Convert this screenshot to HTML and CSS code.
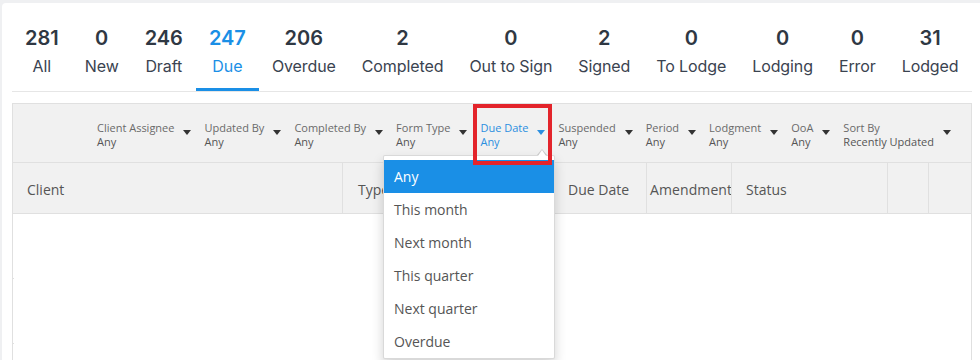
FILE: index.html
```html
<!DOCTYPE html>
<html lang="en">
<head>
  <meta charset="UTF-8">
  <title>Returns</title>
  <link rel="stylesheet" href="styles.css">
</head>
<body>

<div class="card">

  <!-- status tabs -->
  <div class="tabs">
    <div class="tab"><span class="count">281</span><span class="name">All</span></div>
    <div class="tab"><span class="count">0</span><span class="name">New</span></div>
    <div class="tab"><span class="count">246</span><span class="name">Draft</span></div>
    <div class="tab active"><span class="count">247</span><span class="name">Due</span></div>
    <div class="tab"><span class="count">206</span><span class="name">Overdue</span></div>
    <div class="tab"><span class="count">2</span><span class="name">Completed</span></div>
    <div class="tab"><span class="count">0</span><span class="name">Out to Sign</span></div>
    <div class="tab"><span class="count">2</span><span class="name">Signed</span></div>
    <div class="tab"><span class="count">0</span><span class="name">To Lodge</span></div>
    <div class="tab"><span class="count">0</span><span class="name">Lodging</span></div>
    <div class="tab"><span class="count">0</span><span class="name">Error</span></div>
    <div class="tab"><span class="count">31</span><span class="name">Lodged</span></div>
  </div>

  <div class="grid">

    <!-- filters -->
    <div class="filters">
      <div class="filter"><div><div class="f-label">Client Assignee</div><div class="f-value">Any</div></div><span class="caret"></span></div>
      <div class="filter"><div><div class="f-label">Updated By</div><div class="f-value">Any</div></div><span class="caret"></span></div>
      <div class="filter"><div><div class="f-label">Completed By</div><div class="f-value">Any</div></div><span class="caret"></span></div>
      <div class="filter"><div><div class="f-label">Form Type</div><div class="f-value">Any</div></div><span class="caret"></span></div>
      <div class="filter open"><div><div class="f-label">Due Date</div><div class="f-value">Any</div></div><span class="caret"></span></div>
      <div class="filter"><div><div class="f-label">Suspended</div><div class="f-value">Any</div></div><span class="caret"></span></div>
      <div class="filter"><div><div class="f-label">Period</div><div class="f-value">Any</div></div><span class="caret"></span></div>
      <div class="filter"><div><div class="f-label">Lodgment</div><div class="f-value">Any</div></div><span class="caret"></span></div>
      <div class="filter"><div><div class="f-label">OoA</div><div class="f-value">Any</div></div><span class="caret"></span></div>
      <div class="filter sort"><div><div class="f-label">Sort By</div><div class="f-value">Recently Updated</div></div><span class="caret"></span></div>
    </div>

    <!-- column headers -->
    <div class="head">
      <div class="col">Client</div>
      <div class="col">Type</div>
      <div class="col">Due Date</div>
      <div class="col tight">Amendment</div>
      <div class="col">Status</div>
      <div class="col"></div>
      <div class="col"></div>
    </div>

    <div class="rows">
      <div class="row"></div>
      <div class="row"></div>
      <div class="row"></div>
      <div class="mask"></div>
    </div>

    <!-- due date menu -->
    <ul class="menu">
      <li class="selected">Any</li>
      <li>This month</li>
      <li>Next month</li>
      <li>This quarter</li>
      <li>Next quarter</li>
      <li>Overdue</li>
    </ul>

    <div class="highlight"></div>
  </div>

</div>

</body>
</html>
```

FILE: styles.css
```css
* { box-sizing: border-box; }
body { margin: 0; background: #eff0f2; font-family: "Open Sans", "Liberation Sans", sans-serif; overflow: hidden; }

.card { margin: 3px 0 0 2px; height: 400px; padding: 0 8px 0 10px; background: #fff; border-radius: 4px 0 0 0; }

.tabs { display: flex; border-bottom: 1px solid #e6e6e6; font-family: Inter, "Liberation Sans", sans-serif; }
.tab { display: flex; flex-direction: column; align-items: center; padding: 23px 13px 0; border-bottom: 3px solid transparent; height: 88px; white-space: nowrap; }
.tab .count { font-size: 20px; line-height: 24px; font-weight: 600; color: #2f3843; }
.tab .name { font-size: 16px; line-height: 22px; margin-top: 5px; color: #3a4350; letter-spacing: -0.1px; }
.tab.active { border-bottom-color: #1a8fe6; }
.tab.active .count, .tab.active .name { color: #1a8fe6; }

.grid { position: relative; margin-top: 11px; border: 1px solid #e0e0e0; border-bottom: none; }

.filters { display: flex; justify-content: flex-end; gap: 13px; height: 59px; padding: 17px 20px 0 0; background: #f1f1f1; border-bottom: 1px solid #e0e0e0; }
.filter { display: flex; align-items: flex-start; gap: 9px; white-space: nowrap; }
.f-label { font-size: 11px; line-height: 14px; color: #6a6a6a; }
.f-value { font-size: 11px; line-height: 14px; color: #555; }
.caret { margin-top: 9px; border-left: 4px solid transparent; border-right: 4px solid transparent; border-top: 5px solid #333; }
.filter.open .f-label, .filter.open .f-value { color: #2b8fe0; }
.filter.open .caret { border-top-color: #2b8fe0; }

.head { display: grid; grid-template-columns: 330px 210px 94px 85px 156px 41px 42px; height: 51px; background: #f1f1f1; border-bottom: 1px solid #e0e0e0; }
.col { display: flex; align-items: center; padding: 3px 14px 0; border-right: 1px solid #e0e0e0; font-size: 14px; color: #555; white-space: nowrap; overflow: hidden; }
.col:nth-child(2), .col:nth-child(3) { padding-left: 15px; }
.col.tight { padding-left: 3px; padding-right: 0; letter-spacing: 0.1px; }
.col:last-child { border-right: none; }

.rows { position: relative; height: 160px; }
.row { height: 65px; border-bottom: 1px solid #e0e0e0; }
.mask { position: absolute; top: 5px; left: 1px; right: 0; bottom: 0; background: #fff; }

.menu { position: absolute; left: 370px; top: 51px; width: 172px; margin: 0; padding: 4px 0 0; list-style: none; background: #fff; border: 1px solid rgba(0, 0, 0, 0.15); border-radius: 2px; box-shadow: 0 6px 12px rgba(0, 0, 0, 0.18); z-index: 2; }
.menu::before { content: ""; position: absolute; top: -7px; left: 153px; border-left: 5px solid transparent; border-right: 5px solid transparent; border-bottom: 6px solid rgba(0, 0, 0, 0.15); }
.menu::after { content: ""; position: absolute; top: -6px; left: 154px; border-left: 4px solid transparent; border-right: 4px solid transparent; border-bottom: 6px solid #fff; }
.menu li { height: 33px; line-height: 33px; padding-left: 10px; font-size: 14px; color: #555; }
.menu li.selected { background: #1a8fe6; color: #fff; }

.highlight { position: absolute; left: 460px; top: 0; width: 79px; height: 61px; border: 4px solid #e3242b; z-index: 3; }
```
